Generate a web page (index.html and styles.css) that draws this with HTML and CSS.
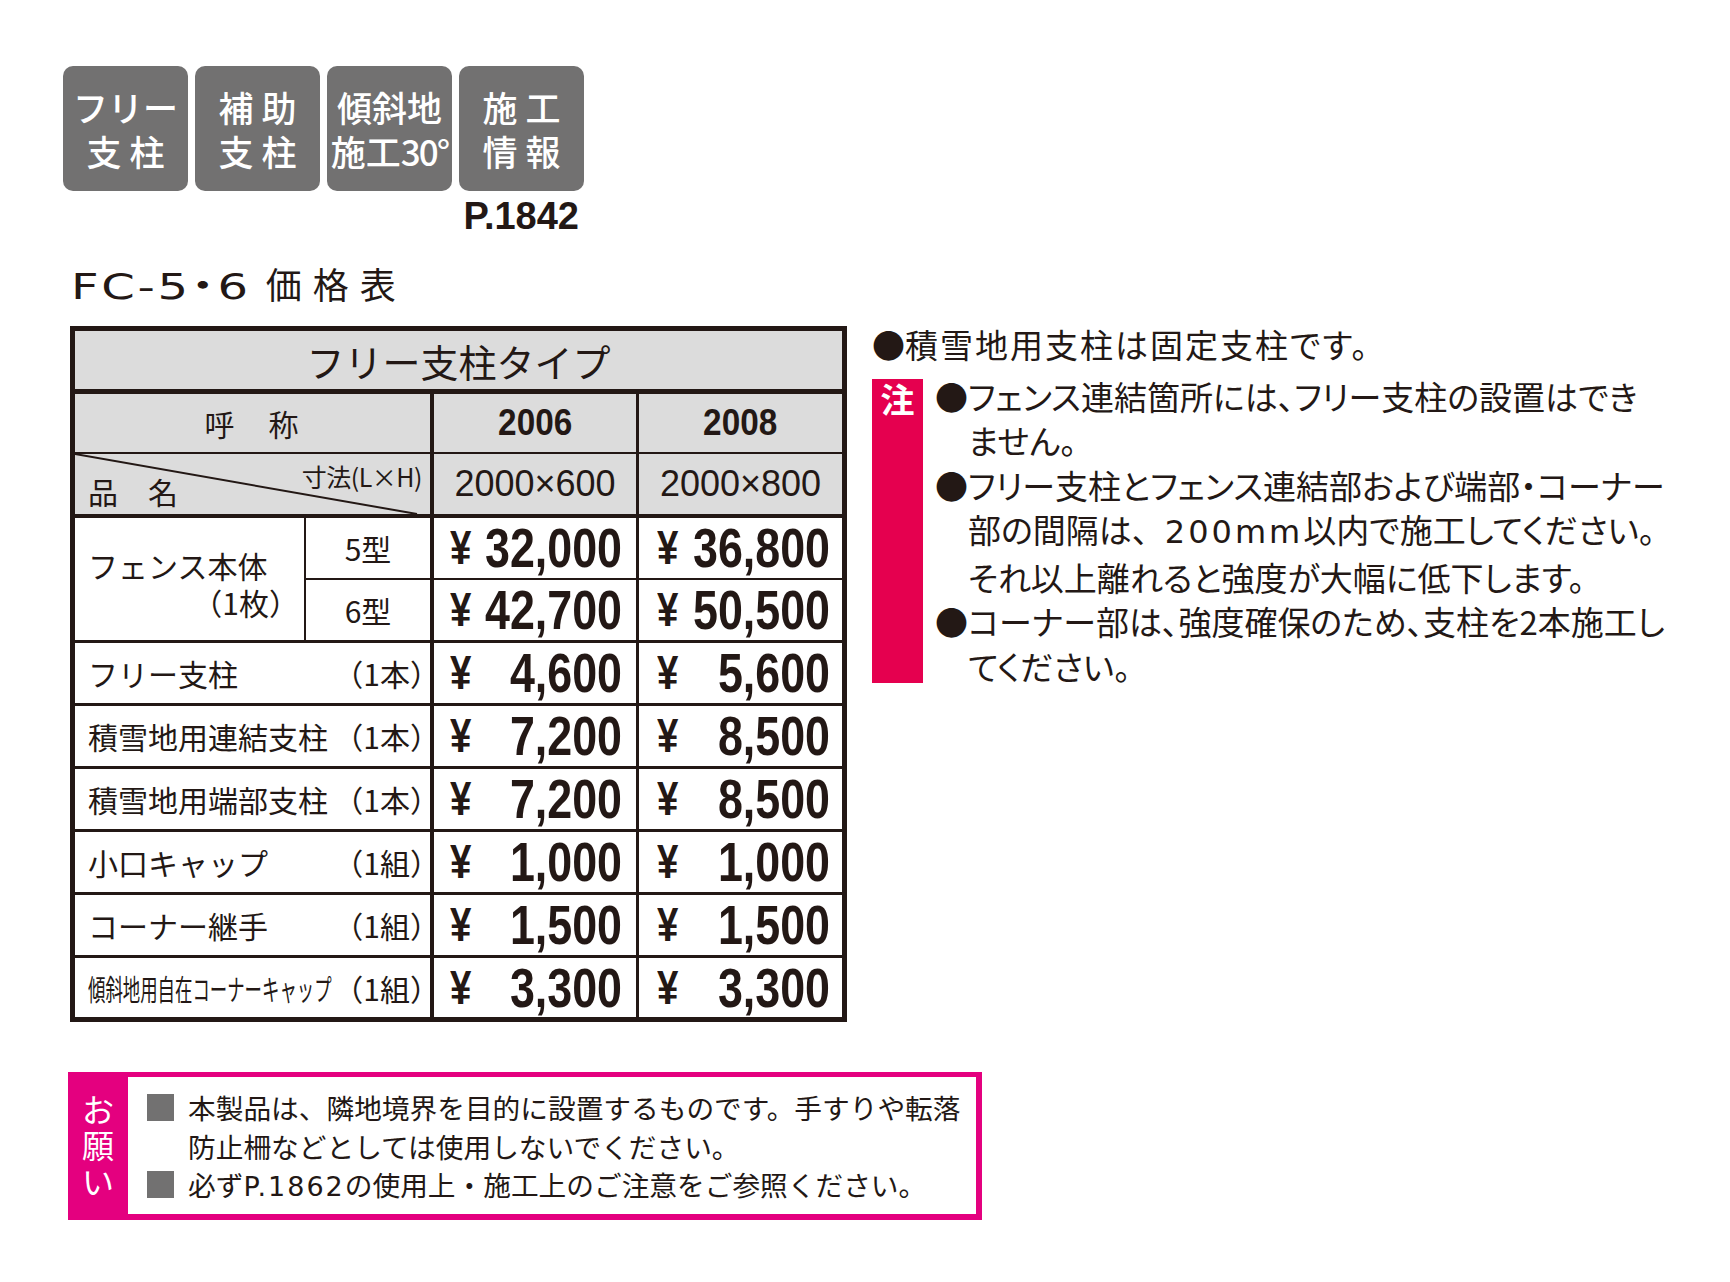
FILE: index.html
```html
<!DOCTYPE html>
<html lang="ja">
<head>
<meta charset="utf-8">
<title>FC-5・6 価格表</title>
<link rel="stylesheet" href="styles.css">
</head>
<body>
<div class="page">
  <div class="badges">
    <div class="badge"><span>フリー</span><span class="sp">支柱</span></div>
    <div class="badge"><span class="sp">補助</span><span class="sp">支柱</span></div>
    <div class="badge"><span>傾斜地</span><span>施工<span class="deg">30°</span></span></div>
    <div class="badge"><span class="sp">施工</span><span class="sp">情報</span></div>
  </div>
  <div class="pnum">P.1842</div>
  <h1 class="title"><span class="tlat">FC-5・6</span><span class="tkan">価格表</span></h1>

  <div class="main">
    <div class="tbl">
      <div class="c gray bb5 ctr htitle">フリー支柱タイプ</div>

      <div class="c gray span2 br4 bb2 ctr hname">呼　称</div>
      <div class="c gray br3 bb2 ctr hyear"><span>2006</span></div>
      <div class="c gray bb2 ctr hyear"><span>2008</span></div>

      <div class="c gray span2 br4 bb4 diag">
        <svg class="dline" viewBox="0 0 355 60" preserveAspectRatio="none"><line x1="0" y1="0" x2="342" y2="60"/></svg>
        <span class="hinmei">品　名</span>
        <span class="sunpo">寸法(L×H)</span>
      </div>
      <div class="c gray br3 bb4 ctr hsize">2000×600</div>
      <div class="c gray bb4 ctr hsize">2000×800</div>

      <div class="c rows2 br2 bb3 fence">
        <span class="fl1">フェンス本体</span>
        <span class="fl2 paren">（1枚）</span>
      </div>
      <div class="c br4 bb2 ctr kata">5型</div>
      <div class="c br3 bb2 pc p2"><div class="pv"><span class="yen">¥</span><span>32,000</span></div></div>
      <div class="c bb2 pc p3"><div class="pv"><span class="yen">¥</span><span>36,800</span></div></div>

      <div class="c br4 bb3 ctr kata">6型</div>
      <div class="c br3 bb3 pc p2"><div class="pv"><span class="yen">¥</span><span>42,700</span></div></div>
      <div class="c bb3 pc p3"><div class="pv"><span class="yen">¥</span><span>50,500</span></div></div>

      <div class="c span2 br4 bb3 lbl"><span>フリー支柱</span><span class="paren">（1本）</span></div>
      <div class="c br3 bb3 pc p2"><div class="pv"><span class="yen">¥</span><span>4,600</span></div></div>
      <div class="c bb3 pc p3"><div class="pv"><span class="yen">¥</span><span>5,600</span></div></div>

      <div class="c span2 br4 bb3 lbl"><span>積雪地用連結支柱</span><span class="paren">（1本）</span></div>
      <div class="c br3 bb3 pc p2"><div class="pv"><span class="yen">¥</span><span>7,200</span></div></div>
      <div class="c bb3 pc p3"><div class="pv"><span class="yen">¥</span><span>8,500</span></div></div>

      <div class="c span2 br4 bb3 lbl"><span>積雪地用端部支柱</span><span class="paren">（1本）</span></div>
      <div class="c br3 bb3 pc p2"><div class="pv"><span class="yen">¥</span><span>7,200</span></div></div>
      <div class="c bb3 pc p3"><div class="pv"><span class="yen">¥</span><span>8,500</span></div></div>

      <div class="c span2 br4 bb3 lbl"><span>小口キャップ</span><span class="paren">（1組）</span></div>
      <div class="c br3 bb3 pc p2"><div class="pv"><span class="yen">¥</span><span>1,000</span></div></div>
      <div class="c bb3 pc p3"><div class="pv"><span class="yen">¥</span><span>1,000</span></div></div>

      <div class="c span2 br4 bb3 lbl"><span>コーナー継手</span><span class="paren">（1組）</span></div>
      <div class="c br3 bb3 pc p2"><div class="pv"><span class="yen">¥</span><span>1,500</span></div></div>
      <div class="c bb3 pc p3"><div class="pv"><span class="yen">¥</span><span>1,500</span></div></div>

      <div class="c span2 br4 lbl"><span class="narrow"><span class="narrow-in">傾斜地用自在コーナーキャップ</span></span><span class="paren">（1組）</span></div>
      <div class="c br3 pc p2"><div class="pv"><span class="yen">¥</span><span>3,300</span></div></div>
      <div class="c pc p3"><div class="pv"><span class="yen">¥</span><span>3,300</span></div></div>
    </div>

    <div class="notes">
      <div class="note0"><span class="bul">●</span><span class="wide">積雪地用支柱は固定支柱です。</span></div>
      <div class="chu">
        <div class="chu-bar">注</div>
        <div class="chu-list">
          <div class="li"><span class="bul">●</span><span>フェンス連結箇所には、フリー支柱の設置はでき<br>ません。</span></div>
          <div class="li"><span class="bul">●</span><span>フリー支柱とフェンス連結部および端部・コーナー<br>部の間隔は<span class="fw">、</span><span class="num">200mm</span>以内で施工してください。<br>それ以上離れると強度が大幅に低下します。</span></div>
          <div class="li"><span class="bul">●</span><span>コーナー部は、強度確保のため、支柱を2本施工し<br>てください。</span></div>
        </div>
      </div>
    </div>
  </div>

  <div class="onegai">
    <div class="ol"><span>お</span><span>願</span><span>い</span></div>
    <div class="ob">
      <div class="oitem"><span class="sq"></span><span>本製品は、隣地境界を目的に設置するものです。手すりや転落<br>防止柵などとしては使用しないでください。</span></div>
      <div class="oitem"><span class="sq"></span><span>必ず<span class="pnum2">P.1862</span>の使用上・施工上のご注意をご参照ください。</span></div>
    </div>
  </div>
</div>
</body>
</html>
```

FILE: styles.css
```css
html, body {
  margin: 0;
  padding: 0;
  background: #ffffff;
}
body {
  font-family: "Noto Sans CJK JP", "Noto Sans", sans-serif;
  color: #231815;
}
.page {
  padding: 66px 0 0 63px;
}

/* badges */
.badges {
  display: flex;
  gap: 7px;
}
.badge {
  width: 125px;
  height: 125px;
  border-radius: 10px;
  background: #727171;
  color: #ffffff;
  display: flex;
  flex-direction: column;
  align-items: center;
  justify-content: center;
  font-size: 35px;
  line-height: 44px;
  font-weight: 500;
  white-space: nowrap;
}
.badge .sp {
  letter-spacing: 8px;
  margin-right: -8px;
}
.badge .deg {
  letter-spacing: -2px;
}
.pnum {
  width: 516px;
  text-align: right;
  font-family: "Liberation Sans", Arial, sans-serif;
  font-weight: 700;
  font-size: 38px;
  line-height: 37px;
  margin-top: 7px;
}
.title {
  margin: 26px 0 0 8px;
  height: 44px;
  font-size: 36px;
  line-height: 44px;
  font-weight: 400;
  white-space: nowrap;
}
.tlat {
  display: inline-block;
  font-family: "DejaVu Sans", "Noto Sans CJK JP", sans-serif;
  font-size: 36px;
  line-height: 36px;
  letter-spacing: 2px;
  font-feature-settings: "halt" 1;
  transform: scaleX(1.335);
  transform-origin: left bottom;
  margin-right: 60px;
}
.tkan {
  letter-spacing: 11px;
}

/* main area */
.main {
  display: flex;
  margin: 21px 0 0 7px;
}

/* table */
.tbl {
  width: 777px;
  height: 696px;
  box-sizing: border-box;
  border: 5px solid #231815;
  display: grid;
  grid-template-columns: 231px 128px 205px 203px;
  grid-template-rows: 63px 60px 64px 62px 63px 63px 63px 63px 63px 63px 59px;
  flex: none;
}
.c {
  box-sizing: border-box;
  border: 0 solid #231815;
  display: flex;
  align-items: center;
  font-size: 30px;
  white-space: nowrap;
  min-width: 0;
}
.gray { background: #dcdcdc; }
.ctr { justify-content: center; }
.span2 { grid-column: span 2; }
.rows2 { grid-row: span 2; }
.br4 { border-right-width: 4px; }
.br3 { border-right-width: 3px; }
.br2 { border-right-width: 2px; }
.bb5 { border-bottom-width: 5px; }
.bb4 { border-bottom-width: 4px; }
.bb3 { border-bottom-width: 3px; }
.bb2 { border-bottom-width: 2px; }

.htitle {
  grid-column: 1 / -1;
  font-size: 38px;
}
.hname {
  letter-spacing: 2px;
}
.hyear span {
  display: inline-block;
  font-family: "Liberation Sans", Arial, sans-serif;
  font-weight: 700;
  font-size: 37px;
  transform: scaleX(0.9);
}
.hsize {
  font-family: "Liberation Sans", Arial, sans-serif;
  font-size: 36px;
}
.diag {
  position: relative;
  justify-content: space-between;
  align-items: flex-end;
  padding: 0 8px 8px 13px;
}
.dline {
  position: absolute;
  left: 0;
  top: 0;
  width: 100%;
  height: 100%;
}
.dline line {
  stroke: #231815;
  stroke-width: 2;
}
.hinmei {
  position: relative;
  line-height: 30px;
}
.sunpo {
  position: relative;
  align-self: flex-start;
  margin-top: 10px;
  font-size: 25px;
  line-height: 25px;
  letter-spacing: -0.5px;
}
.fence {
  flex-direction: column;
  align-items: stretch;
  justify-content: center;
  padding: 10px 20px 0 13px;
  line-height: 37px;
}
.fl2 {
  text-align: right;
}
.paren {
  font-feature-settings: "halt" 1;
}
.kata {
  font-size: 30px;
}
.lbl {
  justify-content: space-between;
  padding: 0 5px 0 13px;
}
.narrow {
  display: inline-block;
  width: 240px;
}
.narrow-in {
  display: inline-block;
  font-size: 29px;
  transform: scaleX(0.6);
  transform-origin: left center;
}

/* prices */
.pc {
  overflow: visible;
}
.p2 { padding: 0 14px 0 16px; }
.p3 { padding: 0 12px 0 18px; }
.pv {
  flex: none;
  width: 125%;
  display: flex;
  justify-content: space-between;
  align-items: center;
  transform: scaleX(0.8);
  transform-origin: left center;
  font-family: "Liberation Sans", Arial, sans-serif;
  font-weight: 700;
  font-size: 56px;
  line-height: 56px;
}
.pv .yen {
  font-size: 48px;
}

/* notes */
.notes {
  margin: -4px 0 0 25px;
  font-size: 33px;
  line-height: 44.5px;
  white-space: nowrap;
  font-feature-settings: "palt" 1;
}
.note0 {
  display: flex;
}
.wide {
  letter-spacing: 2px;
}
.fw {
  font-feature-settings: normal;
}
.num {
  font-family: "DejaVu Sans", sans-serif;
  font-size: 32px;
  letter-spacing: 3px;
}
.bul {
  font-feature-settings: normal;
  width: 33px;
  flex: none;
}
.chu {
  display: flex;
  margin-top: 7px;
}
.chu-bar {
  width: 51px;
  margin: 5px 0;
  background: #e5004f;
  color: #ffffff;
  font-weight: 700;
  font-size: 34px;
  line-height: 40px;
  text-align: center;
  flex: none;
}
.chu-list {
  margin-left: 12px;
}
.li {
  display: flex;
}

/* onegai */
.onegai {
  display: flex;
  width: 914px;
  height: 148px;
  box-sizing: border-box;
  margin: 50px 0 0 5px;
  background: #e4007f;
}
.ol {
  width: 60px;
  flex: none;
  display: flex;
  flex-direction: column;
  align-items: center;
  color: #ffffff;
  font-size: 32px;
  line-height: 36px;
  padding-top: 18px;
  box-sizing: border-box;
}
.ob {
  flex: 1;
  background: #ffffff;
  margin: 5px 6px 6px 0;
  padding: 11px 0 0 19px;
}
.oitem {
  display: flex;
  font-size: 27.7px;
  line-height: 38.5px;
  white-space: nowrap;
}
.pnum2 {
  font-family: "DejaVu Sans", sans-serif;
  font-size: 27px;
  letter-spacing: 2px;
}
.sq {
  width: 27px;
  height: 27px;
  background: #727171;
  flex: none;
  margin: 6px 14px 0 0;
}
```
